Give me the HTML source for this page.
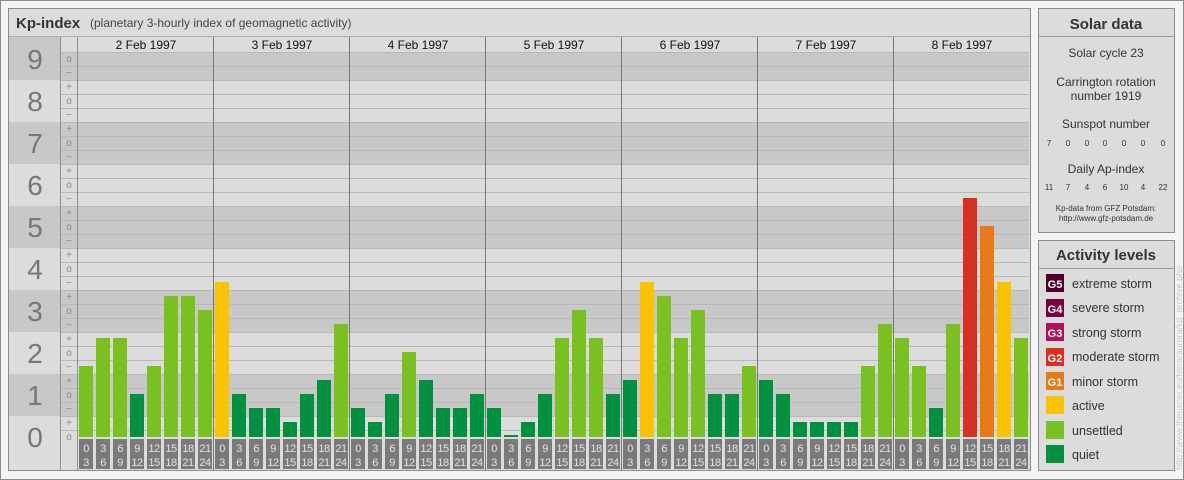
<!DOCTYPE html>
<html><head><meta charset="utf-8"><style>
html,body{margin:0;padding:0;background:#f2f2f2;}
svg{display:block;font-family:"Liberation Sans",sans-serif;}
</style></head><body>
<svg width="1184" height="480" xmlns="http://www.w3.org/2000/svg">
<rect x="0.5" y="0.5" width="1183" height="479" fill="#f4f4f4" stroke="#8c8c8c"/>
<rect x="8.5" y="8.5" width="1022" height="462" fill="#dcdcdc" stroke="#8c8c8c"/>
<line x1="9" y1="36.5" x2="1030" y2="36.5" stroke="#b0b0b0"/>
<text x="16" y="28" font-size="15" font-weight="bold" fill="#333">Kp-index</text>
<text x="90" y="27" font-size="12" fill="#444">(planetary 3-hourly index of geomagnetic activity)</text>
<!-- bands -->
<rect x="9" y="37" width="51" height="43" fill="#c8c8c8"/>
<rect x="9" y="122" width="51" height="42" fill="#c8c8c8"/>
<rect x="9" y="206" width="51" height="42" fill="#c8c8c8"/>
<rect x="9" y="290" width="51" height="42" fill="#c8c8c8"/>
<rect x="9" y="374" width="51" height="42" fill="#c8c8c8"/>
<rect x="78" y="52" width="951" height="28" fill="#c8c8c8"/>
<rect x="78" y="122" width="951" height="42" fill="#c8c8c8"/>
<rect x="78" y="206" width="951" height="42" fill="#c8c8c8"/>
<rect x="78" y="290" width="951" height="42" fill="#c8c8c8"/>
<rect x="78" y="374" width="951" height="42" fill="#c8c8c8"/>
<rect x="61" y="52" width="16" height="28" fill="#c8c8c8"/>
<rect x="61" y="122" width="16" height="42" fill="#c8c8c8"/>
<rect x="61" y="206" width="16" height="42" fill="#c8c8c8"/>
<rect x="61" y="290" width="16" height="42" fill="#c8c8c8"/>
<rect x="61" y="374" width="16" height="42" fill="#c8c8c8"/>
<g stroke="#b8b8b8" stroke-width="1">
<line x1="61" y1="52.5" x2="1029" y2="52.5"/><line x1="61" y1="66.5" x2="1029" y2="66.5"/><line x1="61" y1="80.5" x2="1029" y2="80.5"/><line x1="61" y1="94.5" x2="1029" y2="94.5"/><line x1="61" y1="108.5" x2="1029" y2="108.5"/><line x1="61" y1="122.5" x2="1029" y2="122.5"/><line x1="61" y1="136.5" x2="1029" y2="136.5"/><line x1="61" y1="150.5" x2="1029" y2="150.5"/><line x1="61" y1="164.5" x2="1029" y2="164.5"/><line x1="61" y1="178.5" x2="1029" y2="178.5"/><line x1="61" y1="192.5" x2="1029" y2="192.5"/><line x1="61" y1="206.5" x2="1029" y2="206.5"/><line x1="61" y1="220.5" x2="1029" y2="220.5"/><line x1="61" y1="234.5" x2="1029" y2="234.5"/><line x1="61" y1="248.5" x2="1029" y2="248.5"/><line x1="61" y1="262.5" x2="1029" y2="262.5"/><line x1="61" y1="276.5" x2="1029" y2="276.5"/><line x1="61" y1="290.5" x2="1029" y2="290.5"/><line x1="61" y1="304.5" x2="1029" y2="304.5"/><line x1="61" y1="318.5" x2="1029" y2="318.5"/><line x1="61" y1="332.5" x2="1029" y2="332.5"/><line x1="61" y1="346.5" x2="1029" y2="346.5"/><line x1="61" y1="360.5" x2="1029" y2="360.5"/><line x1="61" y1="374.5" x2="1029" y2="374.5"/><line x1="61" y1="388.5" x2="1029" y2="388.5"/><line x1="61" y1="402.5" x2="1029" y2="402.5"/><line x1="61" y1="416.5" x2="1029" y2="416.5"/><line x1="61" y1="430.5" x2="1029" y2="430.5"/>
</g>
<g stroke="#909090"><line x1="60.5" y1="37" x2="60.5" y2="470"/><line x1="77.5" y1="37" x2="77.5" y2="470"/></g>
<g font-size="28" fill="#777" text-anchor="middle">
<text x="35" y="69">9</text><text x="35" y="111">8</text><text x="35" y="153">7</text><text x="35" y="195">6</text><text x="35" y="237">5</text><text x="35" y="279">4</text><text x="35" y="321">3</text><text x="35" y="363">2</text><text x="35" y="405">1</text><text x="35" y="447">0</text>
</g>
<g font-size="10" fill="#888" text-anchor="middle">
<text x="69" y="62">o</text><text x="69" y="76">−</text>
<text x="69" y="90">+</text><text x="69" y="104">o</text><text x="69" y="118">−</text>
<text x="69" y="132">+</text><text x="69" y="146">o</text><text x="69" y="160">−</text>
<text x="69" y="174">+</text><text x="69" y="188">o</text><text x="69" y="202">−</text>
<text x="69" y="216">+</text><text x="69" y="230">o</text><text x="69" y="244">−</text>
<text x="69" y="258">+</text><text x="69" y="272">o</text><text x="69" y="286">−</text>
<text x="69" y="300">+</text><text x="69" y="314">o</text><text x="69" y="328">−</text>
<text x="69" y="342">+</text><text x="69" y="356">o</text><text x="69" y="370">−</text>
<text x="69" y="384">+</text><text x="69" y="398">o</text><text x="69" y="412">−</text>
<text x="69" y="426">+</text><text x="69" y="440">o</text>
</g>
<rect x="78" y="37" width="951" height="15" fill="#dcdcdc"/>
<g font-size="12" fill="#111" text-anchor="middle">
<text x="146" y="49">2 Feb 1997</text><text x="282" y="49">3 Feb 1997</text><text x="418" y="49">4 Feb 1997</text><text x="554" y="49">5 Feb 1997</text><text x="690" y="49">6 Feb 1997</text><text x="826" y="49">7 Feb 1997</text><text x="962" y="49">8 Feb 1997</text>
</g>
<rect x="78" y="437" width="951" height="33" fill="#dcdcdc"/>
<g stroke="#777"><line x1="213.5" y1="37" x2="213.5" y2="470"/><line x1="349.5" y1="37" x2="349.5" y2="470"/><line x1="485.5" y1="37" x2="485.5" y2="470"/><line x1="621.5" y1="37" x2="621.5" y2="470"/><line x1="757.5" y1="37" x2="757.5" y2="470"/><line x1="893.5" y1="37" x2="893.5" y2="470"/></g>
<g id="bars">
<rect x="79" y="366" width="14" height="71" fill="#7ac020"/><rect x="96" y="338" width="14" height="99" fill="#7ac020"/><rect x="113" y="338" width="14" height="99" fill="#7ac020"/><rect x="130" y="394" width="14" height="43" fill="#009040"/><rect x="147" y="366" width="14" height="71" fill="#7ac020"/><rect x="164" y="296" width="14" height="141" fill="#7ac020"/><rect x="181" y="296" width="14" height="141" fill="#7ac020"/><rect x="198" y="310" width="14" height="127" fill="#7ac020"/>
<rect x="215" y="282" width="14" height="155" fill="#f8c400"/><rect x="232" y="394" width="14" height="43" fill="#009040"/><rect x="249" y="408" width="14" height="29" fill="#009040"/><rect x="266" y="408" width="14" height="29" fill="#009040"/><rect x="283" y="422" width="14" height="15" fill="#009040"/><rect x="300" y="394" width="14" height="43" fill="#009040"/><rect x="317" y="380" width="14" height="57" fill="#009040"/><rect x="334" y="324" width="14" height="113" fill="#7ac020"/>
<rect x="351" y="408" width="14" height="29" fill="#009040"/><rect x="368" y="422" width="14" height="15" fill="#009040"/><rect x="385" y="394" width="14" height="43" fill="#009040"/><rect x="402" y="352" width="14" height="85" fill="#7ac020"/><rect x="419" y="380" width="14" height="57" fill="#009040"/><rect x="436" y="408" width="14" height="29" fill="#009040"/><rect x="453" y="408" width="14" height="29" fill="#009040"/><rect x="470" y="394" width="14" height="43" fill="#009040"/>
<rect x="487" y="408" width="14" height="29" fill="#009040"/><rect x="504" y="435" width="14" height="2" fill="#009040"/><rect x="521" y="422" width="14" height="15" fill="#009040"/><rect x="538" y="394" width="14" height="43" fill="#009040"/><rect x="555" y="338" width="14" height="99" fill="#7ac020"/><rect x="572" y="310" width="14" height="127" fill="#7ac020"/><rect x="589" y="338" width="14" height="99" fill="#7ac020"/><rect x="606" y="394" width="14" height="43" fill="#009040"/>
<rect x="623" y="380" width="14" height="57" fill="#009040"/><rect x="640" y="282" width="14" height="155" fill="#f8c400"/><rect x="657" y="296" width="14" height="141" fill="#7ac020"/><rect x="674" y="338" width="14" height="99" fill="#7ac020"/><rect x="691" y="310" width="14" height="127" fill="#7ac020"/><rect x="708" y="394" width="14" height="43" fill="#009040"/><rect x="725" y="394" width="14" height="43" fill="#009040"/><rect x="742" y="366" width="14" height="71" fill="#7ac020"/>
<rect x="759" y="380" width="14" height="57" fill="#009040"/><rect x="776" y="394" width="14" height="43" fill="#009040"/><rect x="793" y="422" width="14" height="15" fill="#009040"/><rect x="810" y="422" width="14" height="15" fill="#009040"/><rect x="827" y="422" width="14" height="15" fill="#009040"/><rect x="844" y="422" width="14" height="15" fill="#009040"/><rect x="861" y="366" width="14" height="71" fill="#7ac020"/><rect x="878" y="324" width="14" height="113" fill="#7ac020"/>
<rect x="895" y="338" width="14" height="99" fill="#7ac020"/><rect x="912" y="366" width="14" height="71" fill="#7ac020"/><rect x="929" y="408" width="14" height="29" fill="#009040"/><rect x="946" y="324" width="14" height="113" fill="#7ac020"/><rect x="963" y="198" width="14" height="239" fill="#d83020"/><rect x="980" y="226" width="14" height="211" fill="#e87818"/><rect x="997" y="282" width="14" height="155" fill="#f8c400"/><rect x="1014" y="338" width="14" height="99" fill="#7ac020"/>
</g>
<g fill="#7a7a7a">
<rect x="79" y="439" width="14" height="30"/><rect x="96" y="439" width="14" height="30"/><rect x="113" y="439" width="14" height="30"/><rect x="130" y="439" width="14" height="30"/><rect x="147" y="439" width="14" height="30"/><rect x="164" y="439" width="14" height="30"/><rect x="181" y="439" width="14" height="30"/><rect x="198" y="439" width="14" height="30"/>
<rect x="215" y="439" width="14" height="30"/><rect x="232" y="439" width="14" height="30"/><rect x="249" y="439" width="14" height="30"/><rect x="266" y="439" width="14" height="30"/><rect x="283" y="439" width="14" height="30"/><rect x="300" y="439" width="14" height="30"/><rect x="317" y="439" width="14" height="30"/><rect x="334" y="439" width="14" height="30"/>
<rect x="351" y="439" width="14" height="30"/><rect x="368" y="439" width="14" height="30"/><rect x="385" y="439" width="14" height="30"/><rect x="402" y="439" width="14" height="30"/><rect x="419" y="439" width="14" height="30"/><rect x="436" y="439" width="14" height="30"/><rect x="453" y="439" width="14" height="30"/><rect x="470" y="439" width="14" height="30"/>
<rect x="487" y="439" width="14" height="30"/><rect x="504" y="439" width="14" height="30"/><rect x="521" y="439" width="14" height="30"/><rect x="538" y="439" width="14" height="30"/><rect x="555" y="439" width="14" height="30"/><rect x="572" y="439" width="14" height="30"/><rect x="589" y="439" width="14" height="30"/><rect x="606" y="439" width="14" height="30"/>
<rect x="623" y="439" width="14" height="30"/><rect x="640" y="439" width="14" height="30"/><rect x="657" y="439" width="14" height="30"/><rect x="674" y="439" width="14" height="30"/><rect x="691" y="439" width="14" height="30"/><rect x="708" y="439" width="14" height="30"/><rect x="725" y="439" width="14" height="30"/><rect x="742" y="439" width="14" height="30"/>
<rect x="759" y="439" width="14" height="30"/><rect x="776" y="439" width="14" height="30"/><rect x="793" y="439" width="14" height="30"/><rect x="810" y="439" width="14" height="30"/><rect x="827" y="439" width="14" height="30"/><rect x="844" y="439" width="14" height="30"/><rect x="861" y="439" width="14" height="30"/><rect x="878" y="439" width="14" height="30"/>
<rect x="895" y="439" width="14" height="30"/><rect x="912" y="439" width="14" height="30"/><rect x="929" y="439" width="14" height="30"/><rect x="946" y="439" width="14" height="30"/><rect x="963" y="439" width="14" height="30"/><rect x="980" y="439" width="14" height="30"/><rect x="997" y="439" width="14" height="30"/><rect x="1014" y="439" width="14" height="30"/>
</g>
<g font-size="11" fill="#e4e4e4" text-anchor="middle" letter-spacing="-0.5">
<text x="86" y="452">0</text><text x="103" y="452">3</text><text x="120" y="452">6</text><text x="137" y="452">9</text><text x="154" y="452">12</text><text x="171" y="452">15</text><text x="188" y="452">18</text><text x="205" y="452">21</text>
<text x="86" y="466">3</text><text x="103" y="466">6</text><text x="120" y="466">9</text><text x="137" y="466">12</text><text x="154" y="466">15</text><text x="171" y="466">18</text><text x="188" y="466">21</text><text x="205" y="466">24</text>
<text x="222" y="452">0</text><text x="239" y="452">3</text><text x="256" y="452">6</text><text x="273" y="452">9</text><text x="290" y="452">12</text><text x="307" y="452">15</text><text x="324" y="452">18</text><text x="341" y="452">21</text>
<text x="222" y="466">3</text><text x="239" y="466">6</text><text x="256" y="466">9</text><text x="273" y="466">12</text><text x="290" y="466">15</text><text x="307" y="466">18</text><text x="324" y="466">21</text><text x="341" y="466">24</text>
<text x="358" y="452">0</text><text x="375" y="452">3</text><text x="392" y="452">6</text><text x="409" y="452">9</text><text x="426" y="452">12</text><text x="443" y="452">15</text><text x="460" y="452">18</text><text x="477" y="452">21</text>
<text x="358" y="466">3</text><text x="375" y="466">6</text><text x="392" y="466">9</text><text x="409" y="466">12</text><text x="426" y="466">15</text><text x="443" y="466">18</text><text x="460" y="466">21</text><text x="477" y="466">24</text>
<text x="494" y="452">0</text><text x="511" y="452">3</text><text x="528" y="452">6</text><text x="545" y="452">9</text><text x="562" y="452">12</text><text x="579" y="452">15</text><text x="596" y="452">18</text><text x="613" y="452">21</text>
<text x="494" y="466">3</text><text x="511" y="466">6</text><text x="528" y="466">9</text><text x="545" y="466">12</text><text x="562" y="466">15</text><text x="579" y="466">18</text><text x="596" y="466">21</text><text x="613" y="466">24</text>
<text x="630" y="452">0</text><text x="647" y="452">3</text><text x="664" y="452">6</text><text x="681" y="452">9</text><text x="698" y="452">12</text><text x="715" y="452">15</text><text x="732" y="452">18</text><text x="749" y="452">21</text>
<text x="630" y="466">3</text><text x="647" y="466">6</text><text x="664" y="466">9</text><text x="681" y="466">12</text><text x="698" y="466">15</text><text x="715" y="466">18</text><text x="732" y="466">21</text><text x="749" y="466">24</text>
<text x="766" y="452">0</text><text x="783" y="452">3</text><text x="800" y="452">6</text><text x="817" y="452">9</text><text x="834" y="452">12</text><text x="851" y="452">15</text><text x="868" y="452">18</text><text x="885" y="452">21</text>
<text x="766" y="466">3</text><text x="783" y="466">6</text><text x="800" y="466">9</text><text x="817" y="466">12</text><text x="834" y="466">15</text><text x="851" y="466">18</text><text x="868" y="466">21</text><text x="885" y="466">24</text>
<text x="902" y="452">0</text><text x="919" y="452">3</text><text x="936" y="452">6</text><text x="953" y="452">9</text><text x="970" y="452">12</text><text x="987" y="452">15</text><text x="1004" y="452">18</text><text x="1021" y="452">21</text>
<text x="902" y="466">3</text><text x="919" y="466">6</text><text x="936" y="466">9</text><text x="953" y="466">12</text><text x="970" y="466">15</text><text x="987" y="466">18</text><text x="1004" y="466">21</text><text x="1021" y="466">24</text>
</g>
<!-- Solar data -->
<rect x="1038.5" y="8.5" width="136" height="224" fill="#dcdcdc" stroke="#8c8c8c"/>
<line x1="1039" y1="36.5" x2="1174" y2="36.5" stroke="#999"/>
<g text-anchor="middle" fill="#333">
<text x="1106" y="29" font-size="15" font-weight="bold">Solar data</text>
<text x="1106" y="57" font-size="12">Solar cycle 23</text>
<text x="1106" y="86" font-size="12">Carrington rotation</text>
<text x="1106" y="100" font-size="12">number 1919</text>
<text x="1106" y="128" font-size="12">Sunspot number</text>
<text x="1106" y="173" font-size="12">Daily Ap-index</text>
<g font-size="8"><text x="1049" y="146">7</text><text x="1068" y="146">0</text><text x="1087" y="146">0</text><text x="1105" y="146">0</text><text x="1124" y="146">0</text><text x="1143" y="146">0</text><text x="1163" y="146">0</text>
<text x="1049" y="190">11</text><text x="1068" y="190">7</text><text x="1087" y="190">4</text><text x="1105" y="190">6</text><text x="1124" y="190">10</text><text x="1143" y="190">4</text><text x="1163" y="190">22</text></g>
<text x="1106" y="211" font-size="8">Kp-data from GFZ Potsdam:</text>
<text x="1106" y="221" font-size="8">http://www.gfz-potsdam.de</text>
</g>
<!-- Activity levels -->
<rect x="1038.5" y="240.5" width="136" height="230" fill="#dcdcdc" stroke="#8c8c8c"/>
<line x1="1039" y1="268.5" x2="1174" y2="268.5" stroke="#999"/>
<text x="1106" y="260" font-size="15" font-weight="bold" fill="#333" text-anchor="middle">Activity levels</text>
<rect x="1046" y="274" width="18" height="18" fill="#50002a"/>
<rect x="1046" y="299" width="18" height="18" fill="#780040"/>
<rect x="1046" y="323" width="18" height="18" fill="#b0105a"/>
<rect x="1046" y="348" width="18" height="18" fill="#d83020"/>
<rect x="1046" y="372" width="18" height="18" fill="#e87818"/>
<rect x="1046" y="396" width="18" height="18" fill="#f8c400"/>
<rect x="1046" y="421" width="18" height="18" fill="#7ac020"/>
<rect x="1046" y="445" width="18" height="18" fill="#009040"/>
<g font-size="11" font-weight="bold" fill="#fff" text-anchor="middle">
<text x="1055" y="288">G5</text><text x="1055" y="313">G4</text><text x="1055" y="337">G3</text><text x="1055" y="362">G2</text><text x="1055" y="386">G1</text>
</g>
<g font-size="12.5" fill="#333">
<text x="1072" y="288">extreme storm</text><text x="1072" y="312">severe storm</text><text x="1072" y="337">strong storm</text><text x="1072" y="361">moderate storm</text><text x="1072" y="386">minor storm</text><text x="1072" y="410">active</text><text x="1072" y="435">unsettled</text><text x="1072" y="459">quiet</text>
</g>
<text transform="translate(1182,470) rotate(-90)" font-size="9" fill="#c8c8c8">http://www.theusner.eu/terra/aurora/kp_archive.php</text>
</svg>
</body></html>
